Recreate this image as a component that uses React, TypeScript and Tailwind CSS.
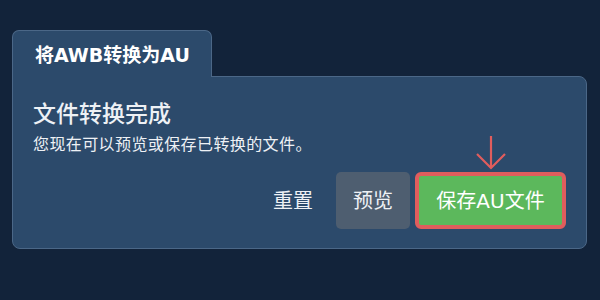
import React from "react";

const font = { fontFamily: '"DejaVu Sans", "Noto Sans CJK SC", sans-serif' };

export default function App() {
  return (
    <div
      className="w-[600px] h-[300px] bg-[#12233a] pt-[30px] pl-[12px] pr-[13px]"
      style={font}
    >
      <div className="relative z-10 -mb-px w-[200px] h-[47px] bg-[#2c4a6b] border border-b-0 border-[#4b6787] rounded-t-[7px] flex items-center pl-[22px] pt-[2px]">
        <span className="text-[19px] font-bold text-white leading-none">将AWB转换为AU</span>
      </div>
      <div className="h-[173px] bg-[#2c4a6b] border border-[#4b6787] rounded-b-[8px] rounded-tr-[8px] flex flex-col px-[20px] pt-[22px] pb-[19px]">
        <h2 className="text-[23px] font-medium text-[#eef1f5] leading-[30px]">文件转换完成</h2>
        <p className="mt-[6px] text-[16px] text-[#eef1f5] leading-[20px] tracking-[0.4px]">您现在可以预览或保存已转换的文件。</p>
        <div className="mt-auto flex items-center justify-end">
          <button className="h-[57px] px-[17px] text-[20px] text-[#eef1f5] mr-[6px]">重置</button>
          <button className="h-[57px] w-[74px] rounded-[5px] bg-[#4e5e70] text-[20px] text-[#eef1f5]">预览</button>
          <div className="relative ml-[5px]">
            <svg
              className="absolute left-1/2 -translate-x-1/2 top-[-37px]"
              width="32"
              height="36"
              viewBox="0 0 32 36"
              fill="none"
            >
              <path d="M16 1 V33 M2 19 L16 33 L30 19" stroke="#e05d5d" strokeWidth="2.2" />
            </svg>
            <button className="h-[57px] w-[151px] rounded-[6px] border-[4px] border-[#e05d5d] bg-[#5cb85c] text-[20px] text-white">
              保存AU文件
            </button>
          </div>
        </div>
      </div>
    </div>
  );
}
